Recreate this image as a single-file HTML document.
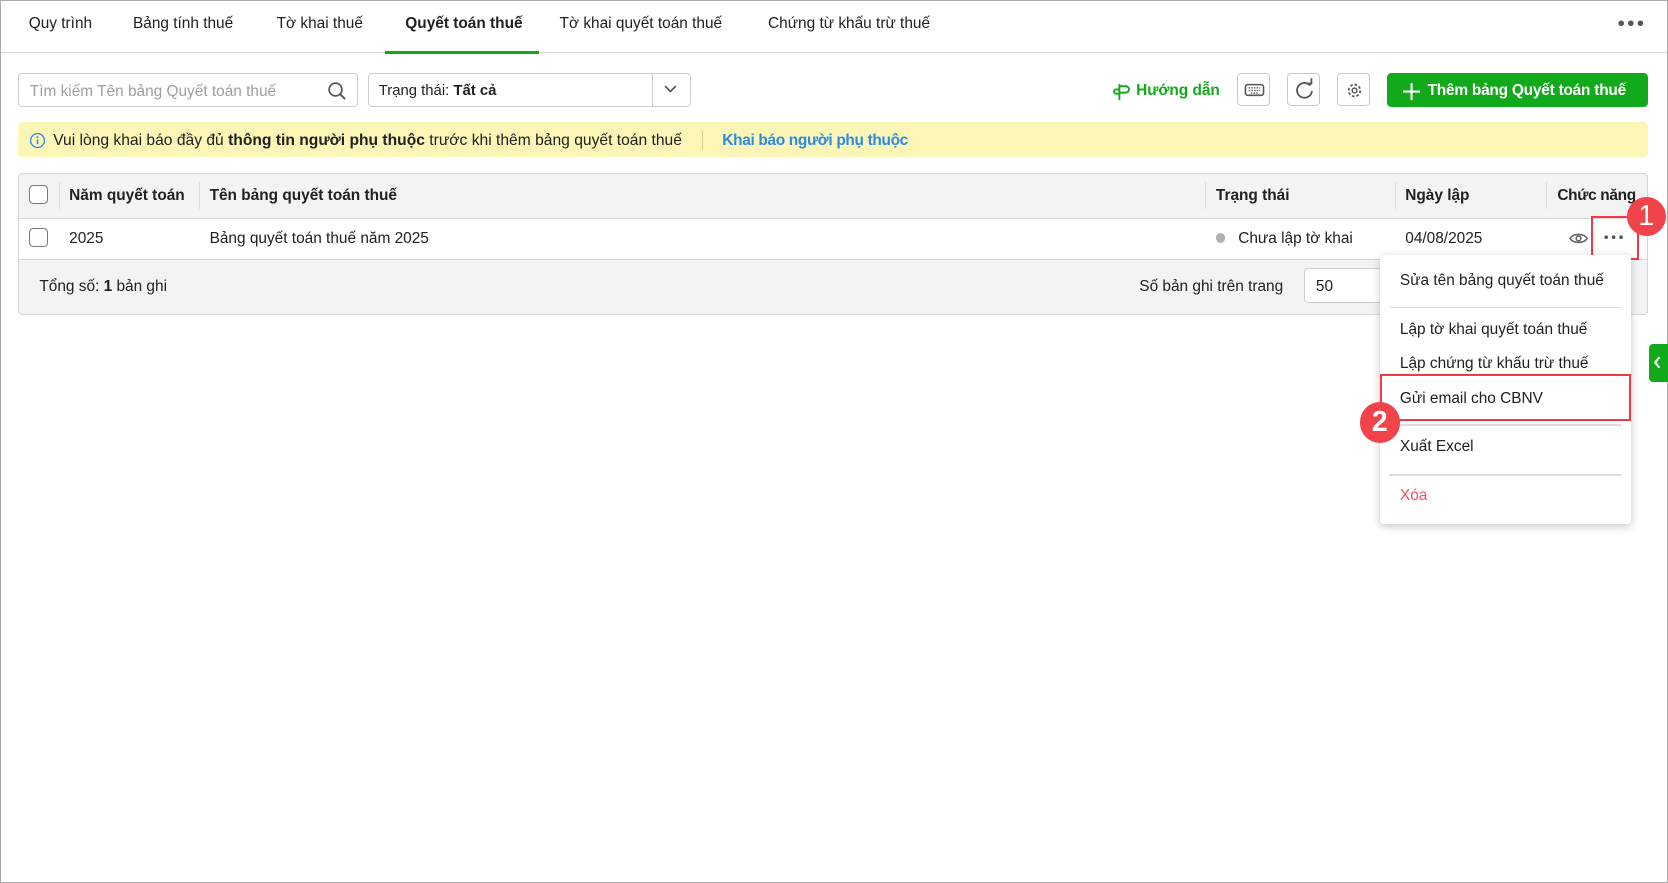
<!DOCTYPE html>
<html><head><meta charset="utf-8"><style>
html{zoom:1.06378}
body{margin:0;width:1568px;height:830px;position:relative;overflow:hidden;background:#fff;font-family:"Liberation Sans",Arial,sans-serif;font-size:14.5px;color:#212121}
.a{position:absolute}
.t{position:absolute;top:14px;white-space:nowrap}
.btn{position:absolute;top:69px;width:31px;height:31px;border:1px solid #c8c8c8;border-radius:4px;box-sizing:border-box;background:#fff}
.vs{position:absolute;width:1px;background:#dcdcdc}
.hl{position:absolute;height:1px;background:#dcdcdc;left:1306px;width:218px}
.mi{position:absolute;left:1316px;white-space:nowrap;font-size:14.5px}
</style></head><body>
<div class="a" style="left:0;top:0;width:1566px;height:828px;border:1px solid #aaa"></div>
<div class="a" style="left:1px;top:49px;width:1566px;height:1px;background:#d6d6d6"></div>
<div class="a" style="left:362px;top:48px;width:145px;height:3px;background:#12a91b"></div>
<span class="t" style="left:27px">Quy trình</span>
<span class="t" style="left:125px">Bảng tính thuế</span>
<span class="t" style="left:260px">Tờ khai thuế</span>
<span class="t" style="left:381px;font-weight:bold">Quyết toán thuế</span>
<span class="t" style="left:526px">Tờ khai quyết toán thuế</span>
<span class="t" style="left:722px">Chứng từ khấu trừ thuế</span>
<svg class="a" style="left:1520px;top:18px" width="28" height="8"><circle cx="4" cy="4" r="2.6" fill="#555"/><circle cx="13" cy="4" r="2.6" fill="#555"/><circle cx="22" cy="4" r="2.6" fill="#555"/></svg>

<div class="a" style="left:17px;top:69px;width:320px;height:32px;border:1px solid #ccc;border-radius:4px;box-sizing:border-box"></div>
<span class="a" style="left:28px;top:78px;color:#9e9e9e">Tìm kiếm Tên bảng Quyết toán thuế</span>
<svg class="a" style="left:307px;top:76px" width="20" height="20"><circle cx="8" cy="8" r="6" fill="none" stroke="#555" stroke-width="1.6"/><path d="M12.5 12.5L17 17" stroke="#555" stroke-width="1.8"/></svg>
<div class="a" style="left:346px;top:69px;width:304px;height:32px;border:1px solid #ccc;border-radius:4px;box-sizing:border-box"></div>
<div class="vs" style="left:613px;top:70px;height:30px;background:#ccc"></div>
<span class="a" style="left:356px;top:78px;font-size:14px">Trạng thái: <b>Tất cả</b></span>
<svg class="a" style="left:623px;top:79px" width="14" height="10"><path d="M2 2l5 5 5-5" fill="none" stroke="#555" stroke-width="1.6"/></svg>

<svg class="a" style="left:1046px;top:77px" width="18" height="18"><path d="M6 2v15M6 4h6a3 3 0 0 1 0 6H6M6 7H3a2 2 0 0 0 0 4h3" fill="none" stroke="#12a91b" stroke-width="1.8"/></svg>
<span class="a" style="left:1068px;top:77px;color:#12a91b;font-weight:bold;font-size:14.5px">Hướng dẫn</span>
<div class="btn" style="left:1163px"><svg width="31" height="31"><rect x="7" y="10" width="17" height="10" rx="2" fill="none" stroke="#555" stroke-width="1.5"/><path d="M10 13h11M10 15.5h11M12 18h7" stroke="#555" stroke-width="1.2" stroke-dasharray="1.5 1"/></svg></div>
<div class="btn" style="left:1210px"><svg width="31" height="31"><path d="M21 11a7 7 0 1 0 1.5 5" fill="none" stroke="#555" stroke-width="1.7"/><path d="M17 9h5V4" fill="none" stroke="#555" stroke-width="1.7"/></svg></div>
<div class="btn" style="left:1257px"><svg width="31" height="31"><circle cx="15.5" cy="15.5" r="5.5" fill="none" stroke="#555" stroke-width="1.6" stroke-dasharray="2.5 1.8"/><circle cx="15.5" cy="15.5" r="2.2" fill="none" stroke="#555" stroke-width="1.4"/></svg></div>
<div class="a" style="left:1304px;top:69px;width:245px;height:32px;background:#12a91b;border-radius:4px"></div>
<svg class="a" style="left:1318px;top:77px" width="18" height="18"><path d="M9 1v16M1 9h16" stroke="#fff" stroke-width="2"/></svg>
<span class="a" style="left:1342px;top:77px;color:#fff;font-weight:bold;font-size:14.5px;letter-spacing:-0.2px">Thêm bảng Quyết toán thuế</span>

<div class="a" style="left:17px;top:115px;width:1532px;height:33px;background:#fbf6b6;border-radius:4px"></div>
<svg class="a" style="left:27px;top:124px" width="16" height="16"><circle cx="8" cy="8" r="6.5" fill="none" stroke="#2b8ae6" stroke-width="1.2"/><path d="M8 7v4.5" stroke="#2b8ae6" stroke-width="1.4"/><circle cx="8" cy="4.8" r=".9" fill="#2b8ae6"/></svg>
<span class="a" style="left:50px;top:124px;font-size:14.7px">Vui lòng khai báo đầy đủ <b>thông tin người phụ thuộc</b> trước khi thêm bảng quyết toán thuế</span>
<div class="vs" style="left:660px;top:123px;height:18px;background:#d7d19a"></div>
<span class="a" style="left:679px;top:124px;color:#2b8ae6;font-weight:bold;font-size:14.5px;letter-spacing:-0.3px">Khai báo người phụ thuộc</span>

<div class="a" style="left:17px;top:163px;width:1532px;height:133px;border:1px solid #d6d6d6;border-radius:4px;box-sizing:border-box;background:#f3f3f3;overflow:hidden">
<div class="a" style="left:0;top:41px;width:1532px;height:38px;background:#fff;border-top:1px solid #d6d6d6;border-bottom:1px solid #d6d6d6"></div>
</div>
<div class="vs" style="left:55px;top:171px;height:25px"></div>
<div class="vs" style="left:187px;top:171px;height:25px"></div>
<div class="vs" style="left:1133px;top:171px;height:25px"></div>
<div class="vs" style="left:1311px;top:171px;height:25px"></div>
<div class="vs" style="left:1453px;top:171px;height:25px"></div>
<div class="a" style="left:27px;top:174px;width:18px;height:18px;border:1px solid #777;border-radius:4px;box-sizing:border-box;background:#fff"></div>
<div class="a" style="left:27px;top:214px;width:18px;height:18px;border:1px solid #777;border-radius:4px;box-sizing:border-box;background:#fff"></div>
<b class="a" style="left:65px;top:176px">Năm quyết toán</b>
<b class="a" style="left:197px;top:176px">Tên bảng quyết toán thuế</b>
<b class="a" style="left:1143px;top:176px">Trạng thái</b>
<b class="a" style="left:1321px;top:176px">Ngày lập</b>
<b class="a" style="left:1464px;top:176px;letter-spacing:-0.3px">Chức năng</b>
<span class="a" style="left:65px;top:216px">2025</span>
<span class="a" style="left:197px;top:216px">Bảng quyết toán thuế năm 2025</span>
<div class="a" style="left:1143px;top:219px;width:9px;height:9px;border-radius:50%;background:#b0b0b0"></div>
<span class="a" style="left:1164px;top:216px">Chưa lập tờ khai</span>
<span class="a" style="left:1321px;top:216px">04/08/2025</span>
<svg class="a" style="left:1475px;top:217px" width="18" height="14"><path d="M1 7C4 2 14 2 17 7C14 12 4 12 1 7Z" fill="none" stroke="#666" stroke-width="1.5"/><circle cx="9" cy="7" r="2.2" fill="none" stroke="#666" stroke-width="1.5"/></svg>
<svg class="a" style="left:1507px;top:220px" width="20" height="6"><circle cx="3" cy="3" r="1.7" fill="#555"/><circle cx="10" cy="3" r="1.7" fill="#555"/><circle cx="17" cy="3" r="1.7" fill="#555"/></svg>
<div class="a" style="left:1496px;top:203px;width:45px;height:41px;border:2px solid #ee3c44;box-sizing:border-box"></div>
<span class="a" style="left:37px;top:261px">Tổng số: <b>1</b> bản ghi</span>
<span class="a" style="left:1071px;top:261px">Số bản ghi trên trang</span>
<div class="a" style="left:1226px;top:252px;width:100px;height:33px;border:1px solid #ccc;border-radius:4px;box-sizing:border-box;background:#fff"></div>
<span class="a" style="left:1237px;top:261px">50</span>

<div class="a" style="left:1297px;top:240px;width:236px;height:253px;background:#fff;border-radius:4px;box-shadow:0 2px 8px rgba(0,0,0,.22)"></div>
<span class="mi" style="top:256px">Sửa tên bảng quyết toán thuế</span>
<div class="hl" style="top:289px"></div>
<span class="mi" style="top:302px">Lập tờ khai quyết toán thuế</span>
<span class="mi" style="top:334px">Lập chứng từ khấu trừ thuế</span>
<span class="mi" style="top:367px">Gửi email cho CBNV</span>
<div class="a" style="left:1297px;top:352px;width:236px;height:44px;border:2px solid #ee3c44;box-sizing:border-box"></div>
<div class="hl" style="top:399px"></div>
<span class="mi" style="top:412px">Xuất Excel</span>
<div class="hl" style="top:446px"></div>
<span class="mi" style="top:458px;color:#f0506e">Xóa</span>

<div class="a" style="left:1529px;top:185px;width:37px;height:37px;border-radius:50%;background:#f0434a;color:#fff;font-size:27px;text-align:center;line-height:37px">1</div>
<div class="a" style="left:1278px;top:378px;width:38px;height:38px;border-radius:50%;background:#f0434a;color:#fff;font-size:27px;font-weight:bold;text-align:center;line-height:38px">2</div>

<div class="a" style="left:1550px;top:323px;width:18px;height:36px;background:#12a91b;border-radius:4px 0 0 4px"></div>
<svg class="a" style="left:1553px;top:334px" width="10" height="14"><path d="M7 2L3 7l4 5" fill="none" stroke="#fff" stroke-width="2"/></svg>
</body></html>
